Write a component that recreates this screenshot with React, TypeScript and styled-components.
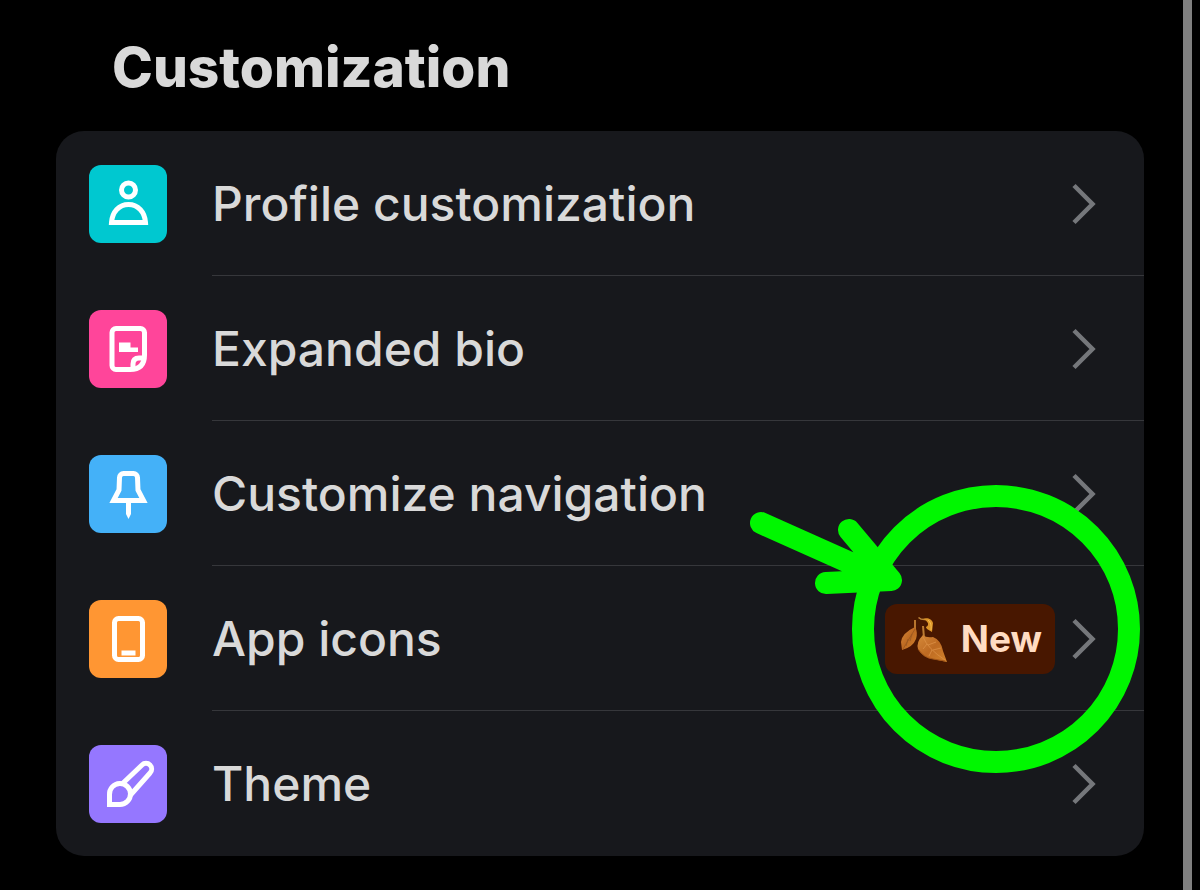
import React from "react";
import styled, { createGlobalStyle } from "styled-components";

const GlobalStyle = createGlobalStyle`
  *, *::before, *::after { box-sizing: border-box; }
  body {
    margin: 0;
    background: #000;
    color: #d9d9d9;
    font-family: Inter, "Liberation Sans", sans-serif;
  }
`;

const Page = styled.div`
  display: flex;
  min-height: 100vh;
  padding-right: 8px;
`;

const Main = styled.main`
  flex: 1;
  min-width: 0;
  padding: 35px 39px 34px 56px;
`;

const ScrollTrack = styled.div`
  flex: none;
  width: 9px;
  background: #808080;
`;

const Title = styled.h1`
  margin: 0 0 32px;
  padding-left: 56px;
  font-size: 55px;
  line-height: 64px;
  font-weight: 800;
`;

const Card = styled.section`
  position: relative;
  border-radius: 28px;
  background: #17181c;
`;

const List = styled.ul`
  margin: 0;
  padding: 0;
  list-style: none;
`;

const RowLink = styled.a`
  display: flex;
  align-items: center;
  gap: 45px;
  height: 145px;
  padding-left: 33px;
  color: inherit;
  text-decoration: none;
`;

const IconTile = styled.span<{ $color: string }>`
  flex: none;
  width: 78px;
  height: 78px;
  border-radius: 12px;
  background: ${(p) => p.$color};

  svg {
    display: block;
  }
`;

const RowBody = styled.span<{ $last: boolean }>`
  display: flex;
  flex: 1;
  align-items: center;
  align-self: stretch;
  gap: 17px;
  padding: 2px 48px 0 0;
  border-bottom: 1px solid ${(p) => (p.$last ? "transparent" : "#36373b")};
`;

const Label = styled.span`
  flex: 1;
  font-size: 48px;
  line-height: 60px;
  font-weight: 500;
`;

const Badge = styled.span`
  display: flex;
  align-items: center;
  gap: 13px;
  height: 70px;
  padding: 0 13px 0 14px;
  border-radius: 12px;
  background: #481700;
  color: #ffdcc2;
  font-size: 37px;
  line-height: 48px;
  font-weight: 700;
`;

const Annotation = styled.svg`
  position: absolute;
  top: 354px;
  right: 0;
  pointer-events: none;
`;

const iconProps = {
  width: 78,
  height: 78,
  viewBox: "0 0 78 78",
  fill: "none",
  stroke: "#fff",
  strokeWidth: 5,
  "aria-hidden": true,
};

const ProfileIcon = () => (
  <svg {...iconProps}>
    <circle cx="39.5" cy="25" r="7" />
    <path d="M22.500 57.500C23.300 47 30 39.500 39.500 39.500S55.700 47 56.500 57.500Z" />
  </svg>
);

const BioIcon = () => (
  <svg {...iconProps}>
    <path d="M41 59.500H27a4 4 0 0 1-4-4V22.500a4 4 0 0 1 4-4H51.500a4 4 0 0 1 4 4V45Q55.500 59.500 41 59.500Z" />
    <path d="M44 59V54Q44 48 50 48H55" />
    <path d="M30 32.500H41.500V37.500H49V42H30Z" fill="#fff" stroke="none" />
  </svg>
);

const PinIcon = () => (
  <svg {...iconProps}>
    <path d="M34.500 18.500H44.500a4 4 0 0 1 4 4L49 35L54.500 45.500H24.500L30 35L30.500 22.500a4 4 0 0 1 4-4Z" />
    <path d="M37 45H42V59L39.500 64L37 59Z" fill="#fff" stroke="none" />
  </svg>
);

const PhoneIcon = () => (
  <svg {...iconProps}>
    <rect x="25.500" y="18.500" width="28" height="41" rx="4" />
    <path d="M32.500 53H46.500" />
  </svg>
);

const BrushIcon = () => (
  <svg {...iconProps}>
    <path d="M20.500 59.500V49.500A10.500 10.500 0 1 1 31 59.500Z" />
    <path d="M32.500 39.500L53 20A5.500 5.500 0 0 1 61 28L41.500 50" />
  </svg>
);

const Chevron = () => (
  <svg width="24" height="42" viewBox="0 0 24 42" fill="none" aria-hidden>
    <path d="M2 2.500L20.500 21L2 39.500" stroke="#75777b" strokeWidth="4.500" />
  </svg>
);

const Leaves = () => (
  <svg width="49" height="48" viewBox="0 0 49 48" fill="none" aria-hidden>
    <defs>
      <linearGradient id="leaf" x1="0" y1="0" x2="1" y2="1">
        <stop offset="0" stopColor="#d68a3a" />
        <stop offset="0.5" stopColor="#bd6a22" />
        <stop offset="1" stopColor="#d4842c" />
      </linearGradient>
    </defs>
    <path d="M19.500 2.500Q22 5 27 4.500" stroke="#bc8438" strokeWidth="1.500" />
    <path d="M24 4C28 2 33 4 34 8L33 17C30 15 27 14 27 12C31 10 29 6 24 4Z" fill="#dc9529" />
    <path d="M29 5Q33 8 32 15" stroke="#f5bd4b" />
    <path d="M16 5L16 16" stroke="#b9762d" strokeWidth="2" />
    <path d="M16 12Q3 18 2 27L3 35Q14 32 17 24Q19 17 16 12Z" fill="url(#leaf)" />
    <path d="M16 14L4 34M13 19L11 26M9 24L7 31" stroke="#99571f" strokeWidth="0.800" />
    <path d="M24 11L25 23" stroke="#bc7c32" strokeWidth="2" />
    <path d="M24 20Q17 27 19 34Q24 43 34 44L48 47L44 36Q42 25 34 22Q27 23 24 20Z" fill="url(#leaf)" />
    <path d="M24 22Q29 34 46 45M29 30L37 27M34 35L42 33M28 29L24 34M33 35L30 41" stroke="#dc9146" strokeWidth="0.800" />
    <path d="M19 34Q25 43 34 44L46 46" stroke="#a35618" />
  </svg>
);

const items = [
  { label: "Profile customization", color: "#00c8d0", Icon: ProfileIcon },
  { label: "Expanded bio", color: "#ff459a", Icon: BioIcon },
  { label: "Customize navigation", color: "#44b1f8", Icon: PinIcon },
  { label: "App icons", color: "#ff9633", Icon: PhoneIcon, badge: "New" },
  { label: "Theme", color: "#9577ff", Icon: BrushIcon },
];

export default function App() {
  return (
    <>
      <GlobalStyle />
      <Page>
        <Main>
          <Title>Customization</Title>
          <Card>
            <List>
              {items.map(({ label, color, Icon, badge }, i) => (
                <li key={label}>
                  <RowLink href="#">
                    <IconTile $color={color}>
                      <Icon />
                    </IconTile>
                    <RowBody $last={i === items.length - 1}>
                      <Label>{label}</Label>
                      {badge && (
                        <Badge>
                          <Leaves />
                          {badge}
                        </Badge>
                      )}
                      <Chevron />
                    </RowBody>
                  </RowLink>
                </li>
              ))}
            </List>
            <Annotation width="404" height="290" viewBox="740 485 404 290" fill="none" aria-hidden>
              <g stroke="#00f700" strokeWidth="22" strokeLinecap="round" strokeLinejoin="round">
                <circle cx="996" cy="629" r="133" />
                <path d="M761 523L884 578M849 530L891 580L826 583" />
              </g>
            </Annotation>
          </Card>
        </Main>
        <ScrollTrack />
      </Page>
    </>
  );
}
